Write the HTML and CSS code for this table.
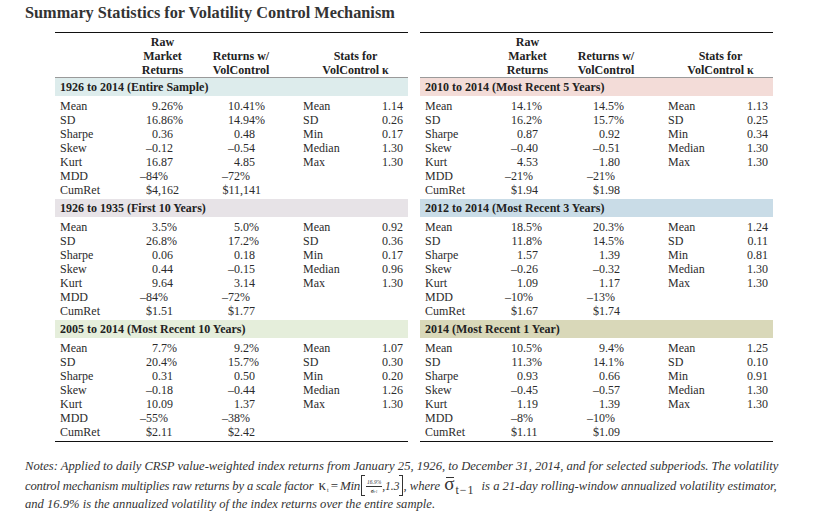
FILE: index.html
```html
<!DOCTYPE html>
<html>
<head>
<meta charset="utf-8">
<link rel="stylesheet" href="styles.css">
</head>
<body>
<h1 class="title">Summary Statistics for Volatility Control Mechanism</h1>
<div class="tables">
  <div class="tbl">
    <div class="head"><span></span><span>Raw<br>Market<br>Returns</span><span class="h3">Returns w/<br>VolControl</span><span>Stats for<br>VolControl κ</span></div>
    <section class="sec">
      <div class="band b1">1926 to 2014 (Entire Sample)</div>
      <div class="rows">
        <div class="row"><span>Mean</span><span class="c2"><span class="ip">9</span>.26%</span><span class="c3"><span class="ip">10</span>.41%</span><span>Mean</span><span class="c5">1.14</span></div>
        <div class="row"><span>SD</span><span class="c2"><span class="ip">16</span>.86%</span><span class="c3"><span class="ip">14</span>.94%</span><span>SD</span><span class="c5">0.26</span></div>
        <div class="row"><span>Sharpe</span><span class="c2"><span class="ip">0</span>.36</span><span class="c3"><span class="ip">0</span>.48</span><span>Min</span><span class="c5">0.17</span></div>
        <div class="row"><span>Skew</span><span class="c2"><span class="ip">–0</span>.12</span><span class="c3"><span class="ip">–0</span>.54</span><span>Median</span><span class="c5">1.30</span></div>
        <div class="row"><span>Kurt</span><span class="c2"><span class="ip">16</span>.87</span><span class="c3"><span class="ip">4</span>.85</span><span>Max</span><span class="c5">1.30</span></div>
        <div class="row"><span>MDD</span><span class="c2"><span class="ip">–84</span>%</span><span class="c3"><span class="ip">–72</span>%</span><span></span><span></span></div>
        <div class="row"><span>CumRet</span><span class="c2"><span class="ip">$4</span>,162</span><span class="c3"><span class="ip">$11</span>,141</span><span></span><span></span></div>
      </div>
    </section>
    <section class="sec">
      <div class="band b2">1926 to 1935 (First 10 Years)</div>
      <div class="rows">
        <div class="row"><span>Mean</span><span class="c2"><span class="ip">3</span>.5%</span><span class="c3"><span class="ip">5</span>.0%</span><span>Mean</span><span class="c5">0.92</span></div>
        <div class="row"><span>SD</span><span class="c2"><span class="ip">26</span>.8%</span><span class="c3"><span class="ip">17</span>.2%</span><span>SD</span><span class="c5">0.36</span></div>
        <div class="row"><span>Sharpe</span><span class="c2"><span class="ip">0</span>.06</span><span class="c3"><span class="ip">0</span>.18</span><span>Min</span><span class="c5">0.17</span></div>
        <div class="row"><span>Skew</span><span class="c2"><span class="ip">0</span>.44</span><span class="c3"><span class="ip">–0</span>.15</span><span>Median</span><span class="c5">0.96</span></div>
        <div class="row"><span>Kurt</span><span class="c2"><span class="ip">9</span>.64</span><span class="c3"><span class="ip">3</span>.14</span><span>Max</span><span class="c5">1.30</span></div>
        <div class="row"><span>MDD</span><span class="c2"><span class="ip">–84</span>%</span><span class="c3"><span class="ip">–72</span>%</span><span></span><span></span></div>
        <div class="row"><span>CumRet</span><span class="c2"><span class="ip">$1</span>.51</span><span class="c3"><span class="ip">$1</span>.77</span><span></span><span></span></div>
      </div>
    </section>
    <section class="sec">
      <div class="band b3">2005 to 2014 (Most Recent 10 Years)</div>
      <div class="rows">
        <div class="row"><span>Mean</span><span class="c2"><span class="ip">7</span>.7%</span><span class="c3"><span class="ip">9</span>.2%</span><span>Mean</span><span class="c5">1.07</span></div>
        <div class="row"><span>SD</span><span class="c2"><span class="ip">20</span>.4%</span><span class="c3"><span class="ip">15</span>.7%</span><span>SD</span><span class="c5">0.30</span></div>
        <div class="row"><span>Sharpe</span><span class="c2"><span class="ip">0</span>.31</span><span class="c3"><span class="ip">0</span>.50</span><span>Min</span><span class="c5">0.20</span></div>
        <div class="row"><span>Skew</span><span class="c2"><span class="ip">–0</span>.18</span><span class="c3"><span class="ip">–0</span>.44</span><span>Median</span><span class="c5">1.26</span></div>
        <div class="row"><span>Kurt</span><span class="c2"><span class="ip">10</span>.09</span><span class="c3"><span class="ip">1</span>.37</span><span>Max</span><span class="c5">1.30</span></div>
        <div class="row"><span>MDD</span><span class="c2"><span class="ip">–55</span>%</span><span class="c3"><span class="ip">–38</span>%</span><span></span><span></span></div>
        <div class="row"><span>CumRet</span><span class="c2"><span class="ip">$2</span>.11</span><span class="c3"><span class="ip">$2</span>.42</span><span></span><span></span></div>
      </div>
    </section>
  </div>
  <div class="tbl">
    <div class="head"><span></span><span>Raw<br>Market<br>Returns</span><span class="h3">Returns w/<br>VolControl</span><span>Stats for<br>VolControl κ</span></div>
    <section class="sec">
      <div class="band r1">2010 to 2014 (Most Recent 5 Years)</div>
      <div class="rows">
        <div class="row"><span>Mean</span><span class="c2"><span class="ip">14</span>.1%</span><span class="c3"><span class="ip">14</span>.5%</span><span>Mean</span><span class="c5">1.13</span></div>
        <div class="row"><span>SD</span><span class="c2"><span class="ip">16</span>.2%</span><span class="c3"><span class="ip">15</span>.7%</span><span>SD</span><span class="c5">0.25</span></div>
        <div class="row"><span>Sharpe</span><span class="c2"><span class="ip">0</span>.87</span><span class="c3"><span class="ip">0</span>.92</span><span>Min</span><span class="c5">0.34</span></div>
        <div class="row"><span>Skew</span><span class="c2"><span class="ip">–0</span>.40</span><span class="c3"><span class="ip">–0</span>.51</span><span>Median</span><span class="c5">1.30</span></div>
        <div class="row"><span>Kurt</span><span class="c2"><span class="ip">4</span>.53</span><span class="c3"><span class="ip">1</span>.80</span><span>Max</span><span class="c5">1.30</span></div>
        <div class="row"><span>MDD</span><span class="c2"><span class="ip">–21</span>%</span><span class="c3"><span class="ip">–21</span>%</span><span></span><span></span></div>
        <div class="row"><span>CumRet</span><span class="c2"><span class="ip">$1</span>.94</span><span class="c3"><span class="ip">$1</span>.98</span><span></span><span></span></div>
      </div>
    </section>
    <section class="sec">
      <div class="band r2">2012 to 2014 (Most Recent 3 Years)</div>
      <div class="rows">
        <div class="row"><span>Mean</span><span class="c2"><span class="ip">18</span>.5%</span><span class="c3"><span class="ip">20</span>.3%</span><span>Mean</span><span class="c5">1.24</span></div>
        <div class="row"><span>SD</span><span class="c2"><span class="ip">11</span>.8%</span><span class="c3"><span class="ip">14</span>.5%</span><span>SD</span><span class="c5">0.11</span></div>
        <div class="row"><span>Sharpe</span><span class="c2"><span class="ip">1</span>.57</span><span class="c3"><span class="ip">1</span>.39</span><span>Min</span><span class="c5">0.81</span></div>
        <div class="row"><span>Skew</span><span class="c2"><span class="ip">–0</span>.26</span><span class="c3"><span class="ip">–0</span>.32</span><span>Median</span><span class="c5">1.30</span></div>
        <div class="row"><span>Kurt</span><span class="c2"><span class="ip">1</span>.09</span><span class="c3"><span class="ip">1</span>.17</span><span>Max</span><span class="c5">1.30</span></div>
        <div class="row"><span>MDD</span><span class="c2"><span class="ip">–10</span>%</span><span class="c3"><span class="ip">–13</span>%</span><span></span><span></span></div>
        <div class="row"><span>CumRet</span><span class="c2"><span class="ip">$1</span>.67</span><span class="c3"><span class="ip">$1</span>.74</span><span></span><span></span></div>
      </div>
    </section>
    <section class="sec">
      <div class="band r3">2014 (Most Recent 1 Year)</div>
      <div class="rows">
        <div class="row"><span>Mean</span><span class="c2"><span class="ip">10</span>.5%</span><span class="c3"><span class="ip">9</span>.4%</span><span>Mean</span><span class="c5">1.25</span></div>
        <div class="row"><span>SD</span><span class="c2"><span class="ip">11</span>.3%</span><span class="c3"><span class="ip">14</span>.1%</span><span>SD</span><span class="c5">0.10</span></div>
        <div class="row"><span>Sharpe</span><span class="c2"><span class="ip">0</span>.93</span><span class="c3"><span class="ip">0</span>.66</span><span>Min</span><span class="c5">0.91</span></div>
        <div class="row"><span>Skew</span><span class="c2"><span class="ip">–0</span>.45</span><span class="c3"><span class="ip">–0</span>.57</span><span>Median</span><span class="c5">1.30</span></div>
        <div class="row"><span>Kurt</span><span class="c2"><span class="ip">1</span>.19</span><span class="c3"><span class="ip">1</span>.39</span><span>Max</span><span class="c5">1.30</span></div>
        <div class="row"><span>MDD</span><span class="c2"><span class="ip">–8</span>%</span><span class="c3"><span class="ip">–10</span>%</span><span></span><span></span></div>
        <div class="row"><span>CumRet</span><span class="c2"><span class="ip">$1</span>.11</span><span class="c3"><span class="ip">$1</span>.09</span><span></span><span></span></div>
      </div>
    </section>
  </div>
</div>
<div class="notes">
  <div class="l1">Notes: Applied to daily CRSP value-weighted index returns from January 25, 1926, to December 31, 2014, and for selected subperiods. The volatility</div>
  <div class="l2"><span class="pre">control mechanism multiplies raw returns by a scale factor</span><span class="fm"><span class="kap">κ<span class="ksub">t</span></span><span class="eq">=</span><span class="min">Min</span><span class="bl"></span><span class="frac"><span class="nu">16.9%</span><span class="de">σ<span class="dsub">t-1</span></span></span><span class="n13">,1.3</span><span class="br"></span></span>, where <span class="sig">σ</span><span class="sigs">t−1</span>is a 21-day rolling-window annualized volatility estimator,</div>
  <div class="l3">and 16.9% is the annualized volatility of the index returns over the entire sample.</div>
</div>
</body>
</html>
```

FILE: styles.css
```css
* { box-sizing: border-box; margin: 0; padding: 0; }
body {
  background: #fff;
  color: #2b2b2b;
  font-family: "Liberation Serif", "Times New Roman", serif;
  width: 816px;
  height: 524px;
  overflow: hidden;
}
.title {
  font-weight: bold;
  font-size: 16.3px;
  line-height: 20px;
  margin: 3px 0 0 25px;
  color: #333;
}
.tables {
  display: flex;
  gap: 12px;
  margin: 9px 0 0 55px;
}
.tbl {
  width: 353px;
  border-top: 1.5px solid #111;
  border-bottom: 1.5px solid #111;
}
.head {
  display: grid;
  grid-template-columns: 75px 65px 108px 1fr;
  align-items: end;
  text-align: center;
  font-weight: bold;
  font-size: 12px;
  line-height: 14px;
  padding-top: 1.5px;
  border-bottom: 1px solid #9a9a9a;
  color: #222;
}
.head .h3 { padding-right: 16px; }
.sec { height: 121px; }
.band {
  height: 18px;
  line-height: 18px;
  font-weight: bold;
  font-size: 12px;
  padding-left: 5px;
  color: #222;
}
.b1 { background: #ddecec; }
.b2 { background: #e7e3e7; }
.b3 { background: #e5eedb; }
.r1 { background: #f3dcd8; }
.r2 { background: #c9dce7; }
.r3 { background: #d9d8b9; }
.rows { padding-top: 3px; }
.row {
  display: grid;
  grid-template-columns: 70px 65px 108px 60px 40px;
  padding-left: 5px;
  height: 14.15px;
  line-height: 14.15px;
  font-size: 12px;
  white-space: nowrap;
}
.ip { display: inline-block; text-align: right; }
.c2 .ip { width: 28px; }
.c3 .ip { width: 45px; }
.c5 { text-align: right; }

.notes {
  margin: 15px 0 0 25px;
  font-style: italic;
  font-size: 12.6px;
  color: #333;
  white-space: nowrap;
}
.l1 { height: 18px; line-height: 18px; }
.l2 { height: 21px; line-height: 21px; }
.l3 { height: 17px; line-height: 17px; }
.pre { letter-spacing: -0.15px; }

.fm { font-style: normal; line-height: 0; margin-left: 5px; }
.kap { font-size: 15px; font-style: normal; }
.ksub { font-size: 6px; vertical-align: -2px; margin-left: 1px; }
.eq { font-size: 13px; margin: 0 2px 0 2px; }
.min { font-size: 13px; font-style: italic; letter-spacing: -0.3px; }
.bl, .br {
  display: inline-block;
  width: 4px;
  height: 21px;
  border: 1.2px solid #333;
  vertical-align: -6px;
}
.bl { border-right: none; margin-left: 1px; }
.br { border-left: none; margin-left: 0; }
.frac {
  display: inline-flex;
  flex-direction: column;
  align-items: center;
  font-size: 5.5px;
  line-height: 6px;
  vertical-align: middle;
  margin: 0 0 0 1px;
}
.nu { font-style: italic; border-bottom: 0.8px solid #333; padding: 0 1px 1px; }
.de { font-weight: bold; padding-top: 1px; }
.dsub { font-size: 3.5px; font-style: italic; font-weight: normal; }
.n13 { font-size: 11.5px; font-style: italic; }
.sig {
  position: relative;
  font-style: normal;
  font-size: 19px;
  line-height: 0;
  margin-left: 1px;
}
.sig::after {
  content: "";
  position: absolute;
  left: 2px;
  right: 1px;
  top: 4px;
  border-top: 1.2px solid #333;
}
.sigs {
  font-style: normal;
  font-size: 12px;
  line-height: 0;
  letter-spacing: 1px;
  vertical-align: -4px;
  margin: 0 7px 0 1px;
}
```
